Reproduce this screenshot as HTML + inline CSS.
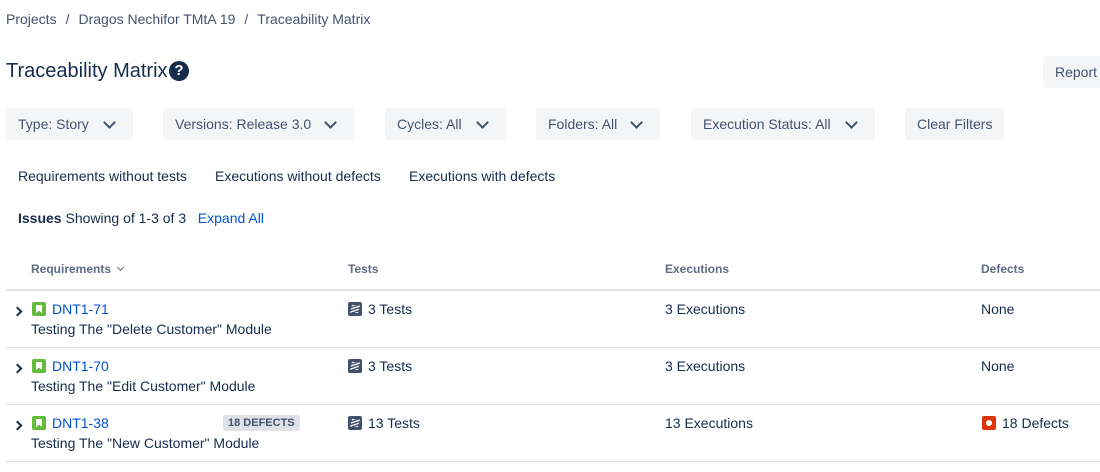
<!DOCTYPE html><html><head><style>
body{margin:0;width:1100px;height:472px;background:#fff;font-family:"Liberation Sans",sans-serif;color:#172b4d;position:relative;overflow:hidden;font-size:14px}
.a{position:absolute;white-space:nowrap}
.btn{position:absolute;top:108px;height:32px;background:#f4f5f7;border-radius:3px;line-height:32px;font-size:14px;color:#42526e;padding-left:12px;box-sizing:border-box}
.chev{display:inline-block;width:7px;height:7px;border-right:2px solid #42526e;border-bottom:2px solid #42526e;transform:rotate(45deg);position:absolute;top:10px}
.th{position:absolute;top:262px;font-size:12px;font-weight:bold;color:#5e6c84}
.line{position:absolute;left:6px;right:0;height:1px;background:#dfe1e6}
.story{position:absolute;width:14px;height:14px;background:#63ba3c;border-radius:2px}
.story:after{content:"";position:absolute;left:4px;top:3px;width:6px;height:8px;background:#fff;clip-path:polygon(0 0,100% 0,100% 100%,50% 70%,0 100%)}
.test{position:absolute;width:14px;height:14px;background:#42526e;border-radius:2px}
.test:after{content:"";position:absolute;left:3px;top:3px;width:8px;height:8px;background:repeating-linear-gradient(160deg,#fff 0 1.5px,transparent 1.5px 3px);transform:skewX(-15deg)}
.arr{position:absolute;width:5px;height:5px;border-right:2px solid #172b4d;border-bottom:2px solid #172b4d;transform:rotate(-45deg)}
a{color:#0052cc;text-decoration:none}
.sep{margin:0 9px}
</style></head><body>
<div class="a" style="left:6px;top:11px;color:#42526e">Projects<span class="sep">/</span>Dragos Nechifor TMtA 19<span class="sep">/</span>Traceability Matrix</div>
<div class="a" style="left:6px;top:60px;font-size:20px;color:#172b4d">Traceability Matrix</div>
<div class="a" style="left:169px;top:61px;width:20px;height:20px;border-radius:50%;background:#172b4d;color:#fff;font-weight:bold;font-size:15px;text-align:center;line-height:20px">?</div>
<div class="a" style="left:1043px;top:56px;width:60px;height:32px;background:#f4f5f7;border-radius:3px;line-height:32px;padding-left:12px;box-sizing:border-box;color:#42526e">Report</div>
<div class="btn" style="left:6px;width:127px">Type: Story<span class="chev" style="left:99px"></span></div>
<div class="btn" style="left:163px;width:191px">Versions: Release 3.0<span class="chev" style="left:163px"></span></div>
<div class="btn" style="left:385px;width:121px">Cycles: All<span class="chev" style="left:93px"></span></div>
<div class="btn" style="left:536px;width:124px">Folders: All<span class="chev" style="left:96px"></span></div>
<div class="btn" style="left:691px;width:184px">Execution Status: All<span class="chev" style="left:156px"></span></div>
<div class="btn" style="left:905px;width:99px">Clear Filters</div>
<div class="a" style="left:18px;top:168px">Requirements without tests</div>
<div class="a" style="left:215px;top:168px">Executions without defects</div>
<div class="a" style="left:409px;top:168px">Executions with defects</div>
<div class="a" style="left:18px;top:210px;font-size:14px"><b>Issues</b> Showing of 1-3 of 3 &nbsp;&nbsp;<a>Expand All</a></div>
<div class="th" style="left:31px">Requirements <span style="display:inline-block;width:4px;height:4px;border-right:1.5px solid #5e6c84;border-bottom:1.5px solid #5e6c84;transform:rotate(45deg);margin-left:4px;position:relative;top:-3px"></span></div>
<div class="th" style="left:348px">Tests</div>
<div class="th" style="left:665px">Executions</div>
<div class="th" style="left:981px">Defects</div>
<div class="line" style="top:289px;height:2px"></div>

<div class="arr" style="left:14px;top:308px"></div><div class="story" style="left:32px;top:302px"></div>
<div class="a" style="left:52px;top:301px"><a>DNT1-71</a></div>
<div class="a" style="left:31px;top:321px">Testing The "Delete Customer" Module</div>
<div class="test" style="left:348px;top:302px"></div><div class="a" style="left:368px;top:301px">3 Tests</div>
<div class="a" style="left:665px;top:301px">3 Executions</div>
<div class="a" style="left:981px;top:301px">None</div>
<div class="line" style="top:347px"></div>

<div class="arr" style="left:14px;top:365px"></div><div class="story" style="left:32px;top:359px"></div>
<div class="a" style="left:52px;top:358px"><a>DNT1-70</a></div>
<div class="a" style="left:31px;top:378px">Testing The "Edit Customer" Module</div>
<div class="test" style="left:348px;top:359px"></div><div class="a" style="left:368px;top:358px">3 Tests</div>
<div class="a" style="left:665px;top:358px">3 Executions</div>
<div class="a" style="left:981px;top:358px">None</div>
<div class="line" style="top:404px"></div>

<div class="arr" style="left:14px;top:422px"></div><div class="story" style="left:32px;top:416px"></div>
<div class="a" style="left:52px;top:415px"><a>DNT1-38</a></div>
<div class="a" style="left:223px;top:415px;background:#dfe1e6;border-radius:3px;font-size:11px;font-weight:bold;color:#42526e;padding:1px 5px;line-height:14px">18 DEFECTS</div>
<div class="a" style="left:31px;top:435px">Testing The "New Customer" Module</div>
<div class="test" style="left:348px;top:416px"></div><div class="a" style="left:368px;top:415px">13 Tests</div>
<div class="a" style="left:665px;top:415px">13 Executions</div>
<div class="a" style="left:982px;top:416px;width:14px;height:14px;background:#de350b;border-radius:2px"><div style="position:absolute;left:4px;top:4px;width:6px;height:6px;background:#fff;border-radius:50%"></div></div>
<div class="a" style="left:1002px;top:415px">18 Defects</div>
<div class="line" style="top:461px"></div>
</body></html>
